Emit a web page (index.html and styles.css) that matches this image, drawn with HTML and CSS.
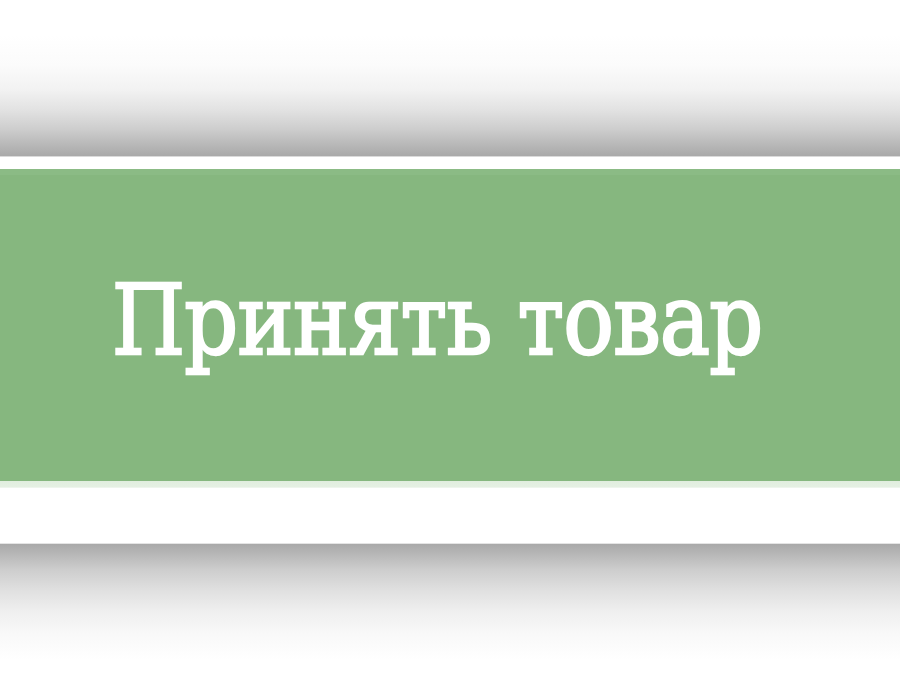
FILE: index.html
```html
<!DOCTYPE html>
<html lang="ru">
<head>
<meta charset="utf-8">
<title>Принять товар</title>
<link rel="stylesheet" href="styles.css">
</head>
<body>
<div class="page">
  <div class="gap-top"></div>
  <div class="shade shade-top"></div>
  <div class="rule rule-top"></div>
  <div class="gap-mid"></div>
  <div class="accept">
    <span class="accept-label">Принять товар</span>
  </div>
  <div class="accept-foot"></div>
  <div class="gap-bottom"></div>
  <div class="rule rule-bottom"></div>
  <div class="shade shade-bottom"></div>
  <div class="gap-end"></div>
</div>
</body>
</html>
```

FILE: styles.css
```css
html, body {
  margin: 0;
  padding: 0;
  background: #ffffff;
}
.page {
  width: 900px;
  height: 700px;
  display: flex;
  flex-direction: column;
  overflow: hidden;
}
.gap-top { height: 35px; flex: none; }
.shade { flex: none; }
.shade-top {
  height: 121px;
  background: linear-gradient(to bottom,
    #ffffff 0%, #fbfbfb 25%, #f2f2f2 45%, #e2e2e2 62%,
    #cdcdcd 78%, #b9b9b9 90%, #a9a9a9 100%);
}
.rule { height: 1px; flex: none; }
.rule-top { background: #dadada; }
.rule-bottom { background: #e4e4e4; }
.gap-mid { height: 12px; flex: none; }
.accept {
  height: 312px;
  flex: none;
  box-sizing: border-box;
  background: #86b77f;
  border-top: 6px solid #8bbb85;
  display: flex;
  align-items: center;
  justify-content: center;
  padding: 0 26px 15px 0;
}
.accept-label {
  font-family: "DejaVu Serif", serif;
  font-size: 97px;
  font-weight: normal;
  color: #ffffff;
  -webkit-text-stroke: 2.5px #ffffff;
  letter-spacing: -1px;
  white-space: nowrap;
  line-height: 1;
  transform: scaleX(0.87);
}
.accept-foot {
  height: 7px;
  flex: none;
  background: linear-gradient(to bottom, #e1eedf 0%, #e5f0e3 80%, #f3f8f2 100%);
}
.gap-bottom { height: 55px; flex: none; }
.shade-bottom {
  height: 116px;
  background: linear-gradient(to bottom,
    #a9a9a9 0%, #b9b9b9 10%, #cdcdcd 22%, #e0e0e0 40%,
    #efefef 58%, #f9f9f9 78%, #ffffff 100%);
}
.gap-end { flex: 1; }
```
